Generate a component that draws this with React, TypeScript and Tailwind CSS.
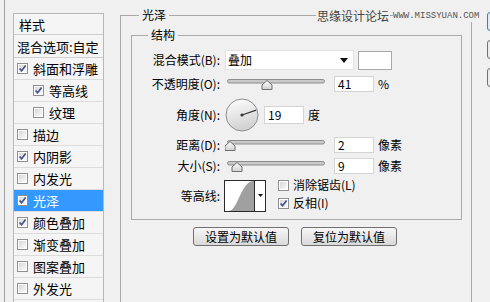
import React from "react";

const F = "font-['Noto_Sans_CJK_SC','Noto_Sans',sans-serif]";

function CheckBox({ checked }: { checked: boolean }) {
  return (
    <svg width="11" height="11" viewBox="0 0 11 11" className="shrink-0">
      <defs>
        <linearGradient id="cbg" x1="0" y1="0" x2="1" y2="1">
          <stop offset="0" stopColor="#d6d6d6" />
          <stop offset="1" stopColor="#fafafa" />
        </linearGradient>
      </defs>
      <rect x="0.5" y="0.5" width="10" height="10" fill="#fff" stroke="#8e8f8f" />
      <rect x="2" y="2" width="7" height="7" fill="url(#cbg)" />
      {checked && (
        <path d="M2.6 5.4 L4.6 7.8 L8.6 2.6" fill="none" stroke="#3b4f8e" strokeWidth="1.6" />
      )}
    </svg>
  );
}

function Slider({ pos }: { pos: number }) {
  return (
    <svg width="102" height="16" viewBox="0 0 102 16" className="shrink-0">
      <defs>
        <linearGradient id="thb" x1="0" y1="0" x2="0" y2="1">
          <stop offset="0" stopColor="#ffffff" />
          <stop offset="1" stopColor="#d0d0d0" />
        </linearGradient>
      </defs>
      <rect x="2.5" y="3.5" width="97" height="3.5" rx="1.7" fill="#c9c9c9" stroke="#8c8c8c" />
      <path
        d={`M${pos} 4.5 L${pos + 5} 9 L${pos + 5} 13.5 L${pos - 5} 13.5 L${pos - 5} 9 Z`}
        fill="url(#thb)"
        stroke="#6f6f6f"
        strokeLinejoin="round"
      />
    </svg>
  );
}

function Field({ value, w = 40, h = 16 }: { value: string; w?: number; h?: number }) {
  return (
    <div
      className="bg-white border border-[#d4d4d4] flex items-center pl-[3px] text-[12px] leading-none shrink-0"
      style={{ width: w, height: h }}
    >
      {value}
    </div>
  );
}

function ListRow({
  label,
  checked,
  indent,
  selected,
}: {
  label: string;
  checked: boolean;
  indent?: boolean;
  selected?: boolean;
}) {
  return (
    <div
      className={`h-[22px] flex items-center border-b border-[#dcdcdc] ${
        selected ? "bg-[#3399ff] text-white" : ""
      } ${indent ? "pl-[19px]" : "pl-[3px]"}`}
    >
      <CheckBox checked={checked} />
      <span className="ml-[5px] text-[13px] leading-none">{label}</span>
    </div>
  );
}

function Label({ children }: { children: React.ReactNode }) {
  return <div className="w-[88px] shrink-0 text-right text-[12px] leading-none">{children}</div>;
}

function Btn({ children }: { children: React.ReactNode }) {
  return (
    <div className="w-[96px] h-[19px] border border-[#707070] rounded-[3px] bg-linear-to-b from-[#f7f7f7] to-[#d9d9d9] text-[12px] leading-none flex items-center justify-center">
      {children}
    </div>
  );
}

export default function App() {
  const a = (19 * Math.PI) / 180;
  return (
    <div className={`w-[490px] h-[302px] bg-[#f0f0f0] relative overflow-hidden flex ${F} text-black`}>
      {/* left column */}
      <div className="flex h-full shrink-0">
        <div className="w-[4px]" />
        <div className="w-px h-full bg-[#a0a0a0]" />
        <div className="ml-[8px] mt-[13px] w-[91px] h-[320px] border border-[#b8b8b8] bg-[#f5f5f5] self-start">
          <div className="h-[21px] flex items-center pl-[5px] border-b border-[#cfcfcf] text-[13px] leading-none">
            样式
          </div>
          <div className="h-[23px] flex items-center pl-[3px] border-b border-[#cfcfcf] text-[13px] leading-none">
            混合选项:自定
          </div>
          <ListRow label="斜面和浮雕" checked />
          <ListRow label="等高线" checked indent />
          <ListRow label="纹理" checked={false} indent />
          <ListRow label="描边" checked={false} />
          <ListRow label="内阴影" checked />
          <ListRow label="内发光" checked={false} />
          <ListRow label="光泽" checked selected />
          <ListRow label="颜色叠加" checked />
          <ListRow label="渐变叠加" checked={false} />
          <ListRow label="图案叠加" checked={false} />
          <ListRow label="外发光" checked={false} />
        </div>
      </div>

      {/* main group */}
      <fieldset className="ml-[16px] mt-[7px] w-[352px] h-[320px] border border-[#a9a9a9] shrink-0">
        <legend className="ml-[18px] px-[3px] text-[12px] leading-[16px]">光泽</legend>
        <fieldset className="ml-[10px] mt-[4px] w-[331px] border border-[#a9a9a9]">
          <legend className="ml-[16px] px-[3px] text-[12px] leading-[16px]">结构</legend>
          <div className="flex flex-col pt-[7px] pb-[7px]">
            {/* blend mode */}
            <div className="h-[20px] flex items-center">
              <Label>混合模式(B):</Label>
              <div className="ml-[5px] w-[129px] h-[20px] bg-white border border-[#e2e2e2] flex items-center pl-[2px] text-[12px] leading-none relative">
                叠加
                <svg width="8" height="5" viewBox="0 0 8 5" className="absolute right-[5px] top-[7px]">
                  <path d="M0 0 L8 0 L4 5 Z" fill="#111" />
                </svg>
              </div>
              <div className="ml-[4px] w-[34px] h-[19px] bg-white border border-[#a8a8a8]" />
            </div>
            {/* opacity */}
            <div className="mt-[6px] h-[16px] flex items-center">
              <Label>不透明度(O):</Label>
              <div className="ml-[5px] flex items-center">
                <Slider pos={42} />
              </div>
              <div className="ml-[7px]">
                <Field value="41" />
              </div>
              <span className="ml-[4px] text-[12px] leading-none">%</span>
            </div>
            {/* angle */}
            <div className="mt-[6px] h-[33px] flex items-center">
              <Label>角度(N):</Label>
              <svg width="34" height="34" viewBox="0 0 34 34" className="ml-[5px] shrink-0">
                <defs>
                  <linearGradient id="dial" x1="0" y1="0" x2="0.3" y2="1">
                    <stop offset="0" stopColor="#ffffff" />
                    <stop offset="1" stopColor="#d2d2d2" />
                  </linearGradient>
                </defs>
                <circle cx="17" cy="17" r="16" fill="url(#dial)" stroke="#8e8e8e" />
                <line
                  x1="17"
                  y1="17"
                  x2={17 + 15 * Math.cos(a)}
                  y2={17 - 15 * Math.sin(a)}
                  stroke="#333"
                  strokeWidth="1.2"
                />
                <circle cx="17" cy="17" r="1.6" fill="#333" />
              </svg>
              <div className="ml-[5px]">
                <Field value="19" w={40} h={18} />
              </div>
              <span className="ml-[4px] text-[12px] leading-none">度</span>
            </div>
            {/* distance */}
            <div className="mt-[6px] h-[16px] flex items-center">
              <Label>距离(D):</Label>
              <div className="ml-[5px] flex items-center">
                <Slider pos={5} />
              </div>
              <div className="ml-[7px]">
                <Field value="2" />
              </div>
              <span className="ml-[4px] text-[12px] leading-none">像素</span>
            </div>
            {/* size */}
            <div className="mt-[5px] h-[16px] flex items-center">
              <Label>大小(S):</Label>
              <div className="ml-[5px] flex items-center">
                <Slider pos={12} />
              </div>
              <div className="ml-[7px]">
                <Field value="9" />
              </div>
              <span className="ml-[4px] text-[12px] leading-none">像素</span>
            </div>
            {/* contour */}
            <div className="mt-[6px] h-[32px] flex items-center">
              <Label>等高线:</Label>
              <svg width="42" height="32" viewBox="0 0 42 32" className="ml-[4px] shrink-0">
                <rect x="0.5" y="0.5" width="41" height="31" fill="#fff" stroke="#2a2a2a" />
                <path d="M5 31 C 14 30, 17 2, 29 1 L 30.5 1 L 30.5 31 Z" fill="#a0a0a0" />
                <line x1="30.5" y1="0.5" x2="30.5" y2="31.5" stroke="#2a2a2a" />
                <path d="M34 14 L39 14 L36.5 17 Z" fill="#111" />
              </svg>
              <div className="ml-[12px] -mt-[4px] flex flex-col">
                <div className="h-[18px] flex items-center">
                  <CheckBox checked={false} />
                  <span className="ml-[4px] text-[12px] leading-none">消除锯齿(L)</span>
                </div>
                <div className="h-[18px] flex items-center">
                  <CheckBox checked />
                  <span className="ml-[4px] text-[12px] leading-none">反相(I)</span>
                </div>
              </div>
            </div>
          </div>
        </fieldset>
        <div className="mt-[7px] ml-[72px] flex gap-[12px]">
          <Btn>设置为默认值</Btn>
          <Btn>复位为默认值</Btn>
        </div>
      </fieldset>

      {/* right-edge buttons */}
      <div className="ml-[15px] mt-[12px] flex flex-col gap-[9px] shrink-0">
        <div className="w-[40px] h-[19px] rounded-[3px] border border-[#3c7fb1] bg-[#dcecfc]" />
        <div className="w-[40px] h-[19px] rounded-[3px] border border-[#707070] bg-[#ececec]" />
        <div className="w-[40px] h-[19px] rounded-[3px] border border-[#707070] bg-[#ececec]" />
      </div>

      {/* watermark overlay */}
      <div className="absolute top-[8px] left-[316px] h-[15px] flex items-center bg-[#f0f0f0] px-px text-[12px] leading-none text-[#444]">
        思缘设计论坛
      </div>
      <div className="absolute top-[10px] left-[393px] h-[12px] w-[88px] flex items-center bg-[#f0f0f0] font-['Liberation_Mono',monospace] text-[9px] leading-none text-[#555]">
        WWW.MISSYUAN.COM
      </div>
    </div>
  );
}
